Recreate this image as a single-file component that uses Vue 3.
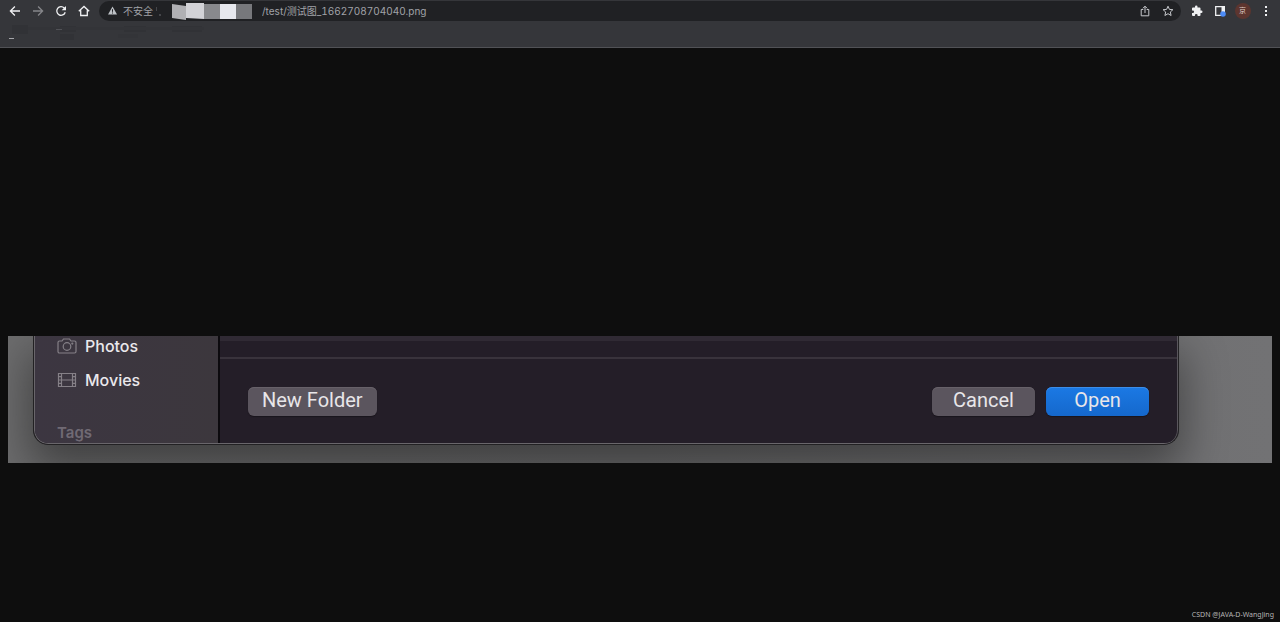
<script setup>
import { ref } from 'vue'

const path = ref('/test/测试图_1662708704040.png')
const places = [
  { name: 'Photos', icon: 'camera' },
  { name: 'Movies', icon: 'film' },
]
</script>

<template>
  <div class="browser">
    <header class="chrome">
      <div class="toolbar">
        <nav class="tools" aria-label="Navigation">
          <button class="tool" aria-label="Back">
            <svg width="12" height="12" viewBox="0 0 12 12"><path d="M11 6H1.600M5.900 1.500 1.400 6l4.500 4.500" /></svg>
          </button>
          <button class="tool dim" aria-label="Forward">
            <svg width="12" height="12" viewBox="0 0 12 12"><path d="M1 6h9.400M6.100 1.500 10.600 6l-4.500 4.500" /></svg>
          </button>
          <button class="tool" aria-label="Reload">
            <svg width="12" height="12" viewBox="0 0 12 12"><path d="M10.200 7.200A4.300 4.300 0 1 1 9.200 3l.9 1" /><path class="solid" d="M11 1v4.300H6.700z" /></svg>
          </button>
          <button class="tool" aria-label="Home">
            <svg width="12" height="12" viewBox="0 0 12 12"><path d="M.8 6.300 6 1.500l5.200 4.800M2.700 5.200v5.300h6.600V5.200" /></svg>
          </button>
        </nav>

        <div class="address">
          <button class="security">
            <svg width="9" height="9" viewBox="0 0 9 9"><path d="M4.500.5 9 8.500H0z" fill="#bdc1c6" /><path d="M4.500 3.200v2.600M4.500 6.500v1" stroke="#202124" /></svg>
            <span>不安全</span>
          </button>
          <svg class="mosaic" width="96" height="18" viewBox="0 0 96 18" aria-hidden="true">
            <path d="M0 5v4M4 12v2" stroke="#6b6c70" />
            <path d="M16 2l14 2v14l-14-2z" fill="#b0b0b4" />
            <path d="M30 1h18v16l-18-1z" fill="#d2d2d7" />
            <path d="M48 2h16v15H48z" fill="#88898d" />
            <path d="M64 2h16v15H64z" fill="#e7e8ee" />
            <path d="M80 2h16v15H80z" fill="#77787c" />
          </svg>
          <input v-model="path" class="url" type="text" aria-label="Address" spellcheck="false" />
          <button class="tool soft" aria-label="Share">
            <svg width="12" height="12" viewBox="0 0 12 12"><path d="M4.300 4.500H2.200v6.300h7.600V4.500H7.700M6 8V1.400M3.900 3.300 6 1.200l2.100 2.100" /></svg>
          </button>
          <button class="tool soft" aria-label="Bookmark">
            <svg width="12" height="12" viewBox="0 0 12 12"><path d="m6 1.200 1.400 3.200 3.500.3-2.600 2.300.8 3.500L6 8.700l-3.100 1.800.8-3.500L1.100 4.700l3.500-.3z" /></svg>
          </button>
        </div>

        <div class="tools">
          <button class="tool" aria-label="Extensions">
            <svg width="12" height="12" viewBox="0 0 24 24"><path class="solid" d="M20.500 11H19V7a2 2 0 0 0-2-2h-4V3.500a2.500 2.500 0 0 0-5 0V5H4a2 2 0 0 0-2 2v3.800h1.500a2.700 2.700 0 0 1 0 5.400H2V20a2 2 0 0 0 2 2h3.800v-1.500a2.700 2.700 0 0 1 5.400 0V22H17a2 2 0 0 0 2-2v-4h1.500a2.500 2.500 0 0 0 0-5z" /></svg>
          </button>
          <button class="tool" aria-label="Side panel">
            <svg width="12" height="12" viewBox="0 0 12 12"><path d="M1.700 1.700h8.600v8.600H1.700z" /><path class="solid" d="M7.500 1H11v6H7.500z" /><circle cx="9" cy="9" r="2.800" fill="#4c8bf5" stroke="none" /></svg>
          </button>
          <button class="tool" aria-label="Profile"><span class="avatar">京</span></button>
          <button class="tool" aria-label="Menu">
            <svg width="12" height="12" viewBox="0 0 12 12"><path class="solid" d="M5 1h2v2H5zM5 5h2v2H5zM5 9h2v2H5z" /></svg>
          </button>
        </div>
      </div>
      <div class="bookmarks">
        <svg width="220" height="22" viewBox="0 0 220 22" aria-hidden="true">
          <path d="M12 3h16v9H12zM60 4h16v6H60zM60 12h14v6H60zM124 4h22v6h-22zM172 4h30v6h-30z" fill="#313236" />
          <path d="M28 5h176v3H28zM118 12h20v4h-20z" fill="#333438" />
          <path d="M9 16.500h5" stroke="#a5a6aa" />
          <path d="M56 7.500h6" stroke="#515257" />
        </svg>
      </div>
    </header>

    <main class="viewer">
      <section class="picture">
        <div class="dialog">
          <aside class="sidebar">
            <a v-for="place in places" :key="place.name" class="place" href="#">
              <svg v-if="place.icon === 'camera'" width="20" height="16" viewBox="0 0 20 16">
                <path d="M2.500 3H5l1.500-2h6L14 3h3.500c.8 0 1.500.6 1.500 1.500v9c0 .8-.6 1.500-1.500 1.500h-15C1.600 15 1 14.300 1 13.500v-9C1 3.600 1.700 3 2.500 3z" />
                <circle cx="10" cy="8.500" r="3.800" /><circle cx="15.300" cy="5.600" r=".5" />
              </svg>
              <svg v-else width="20" height="16" viewBox="0 0 20 16">
                <path d="M1.500 1.500h17v13h-17zM4.500 1.500v13M15.500 1.500v13M4.500 8h11M1.500 4.700h3M1.500 8h3M1.500 11.300h3M15.500 4.700h3M15.500 8h3M15.500 11.300h3" />
              </svg>
              <span>{{ place.name }}</span>
            </a>
            <h2>Tags</h2>
          </aside>
          <div class="content">
            <div class="scrollbar"></div>
            <div class="list-end"></div>
            <footer class="actions">
              <button class="push">New Folder</button>
              <span class="spacer"></span>
              <button class="push wide">Cancel</button>
              <button class="push wide primary">Open</button>
            </footer>
          </div>
        </div>
      </section>
      <p class="credit">CSDN @JAVA-D-WangJing</p>
    </main>
  </div>
</template>

<style>
body {
  margin: 0;
  background: #0e0e0e;
}
</style>

<style scoped>
* {
  box-sizing: border-box;
}
button {
  margin: 0;
  padding: 0;
  border: 0;
  background: none;
  font: inherit;
  color: inherit;
}
.browser {
  display: flex;
  flex-direction: column;
  min-height: 100vh;
  background: #0e0e0e;
  font-family: Inter, "Noto Sans CJK SC", sans-serif;
}
.chrome {
  background: #35363a;
  border-bottom: 1px solid #515256;
}
.toolbar {
  display: flex;
  align-items: center;
  gap: 4px;
  height: 22px;
  padding: 0 3px;
}
.tools {
  display: flex;
}
.tool {
  display: flex;
  flex: none;
  align-items: center;
  justify-content: center;
  width: 23px;
  height: 22px;
  color: #f0f1f3;
}
.tool svg {
  fill: none;
  stroke: currentColor;
  stroke-width: 1.3;
}
.tool .solid {
  fill: currentColor;
  stroke: none;
}
.tool.dim {
  color: #85868a;
}
.tool.soft {
  color: #c6c8cc;
}
.tool.soft svg {
  stroke-width: 1;
}
.address {
  display: flex;
  flex: 1;
  align-items: center;
  height: 20px;
  padding: 0 2px 0 9px;
  border-radius: 10px;
  background: #202124;
  color: #a0a3a8;
  font-size: 10px;
  font-variant-numeric: tabular-nums;
}
.security {
  display: flex;
  align-items: center;
  gap: 6px;
  width: 48px;
  padding-bottom: 1px;
  white-space: nowrap;
}
.mosaic {
  flex: none;
}
.url {
  flex: 1;
  min-width: 0;
  height: 18px;
  margin-left: 10px;
  padding: 0 0 2px;
  border: 0;
  outline: 0;
  background: none;
  color: inherit;
  font: inherit;
  font-variant-numeric: inherit;
}
.avatar {
  width: 16px;
  height: 16px;
  border-radius: 50%;
  background: #5c352f;
  color: #e0cfc9;
  font-size: 7px;
  line-height: 16px;
  text-align: center;
}
.bookmarks {
  height: 25px;
}
.bookmarks svg {
  display: block;
}
.viewer {
  display: flex;
  flex: 1;
  flex-direction: column;
  justify-content: space-between;
  padding-top: 288px;
}
.picture {
  overflow: hidden;
  margin: 0 8px;
  padding: 0 93px 18px 25px;
  background: linear-gradient(90deg, #6c6c6d, #6a6a6b 50%, #727274);
}
.dialog {
  display: flex;
  height: 109px;
  border: 1px solid #222123;
  border-top: 0;
  border-radius: 0 0 15px 15px;
  background: #241e28;
  box-shadow: inset 1px -1px #69666b, inset -1px 0 #5a575d, 0 20px 44px 4px rgba(0, 0, 0, 0.4);
}
.sidebar {
  width: 185px;
  margin: 0 0 1px 1px;
  padding-left: 22px;
  border-right: 2px solid #0c0a0e;
  border-radius: 0 0 0 13px;
  background: linear-gradient(90deg, #3c3641, #3c373d);
}
.place {
  display: flex;
  align-items: center;
  gap: 8px;
  height: 20px;
  margin-bottom: 14px;
  color: #eae8ec;
  font-size: 16px;
  font-weight: 500;
  line-height: 20px;
  text-decoration: none;
}
.place svg {
  fill: none;
  stroke: #858087;
  stroke-width: 1.2;
}
.sidebar h2 {
  margin: 0;
  padding-top: 19px;
  color: #706a74;
  font-size: 15px;
  font-weight: 600;
  line-height: 20px;
}
.content {
  flex: 1;
  min-width: 0;
  margin-right: 1px;
}
.scrollbar {
  height: 5px;
  background: #302a34;
}
.list-end {
  height: 18px;
  border-bottom: 2px solid #39333c;
}
.actions {
  display: flex;
  gap: 11px;
  padding: 28px 28px 0;
}
.spacer {
  flex: 1;
}
.push {
  height: 29px;
  padding: 0 14px 2px;
  border-radius: 6px;
  background: #5b555e;
  box-shadow: inset 0 1px #676169, 0 1px 1px #19141c;
  color: #e8e6e9;
  font-family: Roboto, sans-serif;
  font-size: 20px;
  line-height: 27px;
}
.push.wide {
  width: 103px;
}
.push.primary {
  background: linear-gradient(#1b79e4, #1568cc);
  box-shadow: inset 0 1px #3c8de8, 0 1px 1px #19141c;
}
.credit {
  margin: 0;
  padding: 0 6px 2px;
  color: #b5b5b5;
  font-family: "Noto Sans", sans-serif;
  font-size: 7px;
  line-height: 10px;
  text-align: right;
}
</style>
